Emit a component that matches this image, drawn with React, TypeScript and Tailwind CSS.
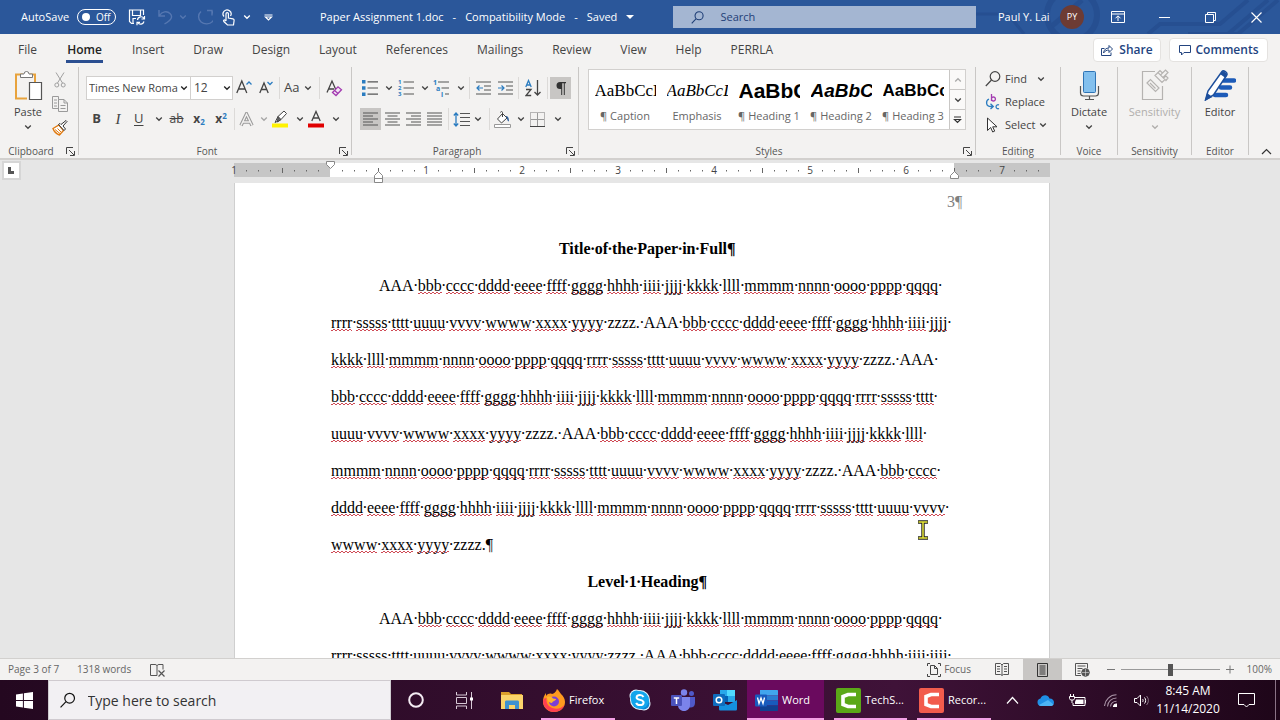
import type { ReactNode } from 'react'

/* ---------- small shared pieces ---------- */

function Chevron({ className = 'text-[#444]' }: { className?: string }) {
  return (
    <svg width="8" height="6" viewBox="0 0 8 6" className={`shrink-0 ${className}`} fill="none" stroke="currentColor" strokeWidth="1.3">
      <path d="M1.2 1.5 4 4.3 6.8 1.5" />
    </svg>
  )
}

type ToolProps = {
  label: string
  width: string
  children: ReactNode
  active?: boolean
  menu?: boolean
  faded?: boolean
}

function Tool({ label, width, children, active, menu, faded }: ToolProps) {
  return (
    <button
      type="button"
      aria-label={label}
      className={`flex h-[22px] shrink-0 items-center gap-1 ${menu ? 'justify-between px-[2px]' : 'justify-center'} ${active ? 'bg-[#c8c6c4]' : ''} ${width}`}
    >
      {children}
      {menu && <Chevron className={faded ? 'text-[#a6a6a6]' : 'text-[#444]'} />}
    </button>
  )
}

function Divider() {
  return <span className="mx-[2px] h-[22px] w-px shrink-0 bg-[#dcdad8]" />
}

function Launcher() {
  return (
    <button type="button" aria-label="More options" className="absolute right-[3px] -bottom-px">
      <svg width="9" height="9" viewBox="0 0 9 9" fill="none" stroke="#444">
        <path d="M.5 7V.5H7M3 3l5 5M8.500 4v4.500H4" />
      </svg>
    </button>
  )
}

type GroupProps = {
  name: string
  width: string
  launcher?: boolean
  children: ReactNode
}

function Group({ name, width, launcher, children }: GroupProps) {
  return (
    <section aria-label={name} className={`relative flex flex-col border-r border-[#c9c7c5] ${width}`}>
      <div className="flex-1">{children}</div>
      <div className={`text-center text-[10px] leading-2 text-[#555] ${launcher ? 'pr-4' : ''}`}>{name}</div>
      {launcher && <Launcher />}
    </section>
  )
}

/* ---------- title bar ---------- */

function TitleBar() {
  return (
    <header className="relative flex h-[34px] shrink-0 items-center overflow-hidden bg-[#2b579a] text-[12px] text-white">
      <svg className="absolute top-0 right-0" width="340" height="34" fill="none" stroke="#264f91">
        <circle cx="132" cy="15" r="25" strokeWidth="6" />
        <path d="M36 14h32l16 20" strokeWidth="3" />
        <path d="m112 26 30-26" strokeWidth="5" />
        <path d="M208 34l12-10h60l28-24M248 34h40l40-34M262 34h36l40-34" strokeWidth="4" />
      </svg>

      <div className="relative flex w-[310px] shrink-0 items-center pl-[21px]">
        <span className="text-[11px]">AutoSave</span>
        <button type="button" aria-label="AutoSave" className="ml-2 flex h-4 w-[39px] items-center gap-[6px] rounded-full border border-white px-1 text-[10px] leading-3">
          <span className="h-2 w-2 rounded-full bg-white" />
          Off
        </button>
        <button type="button" aria-label="Save" className="ml-3">
          <svg width="18" height="18" viewBox="0 0 18 18" fill="none" stroke="#fff" strokeWidth="1.2">
            <path d="M6 15.500H3.500L1.500 13.500V2h14v5M4.500 2v5.500h8V2M5 15.500v-5h3" />
            <path d="M9.500 12a3.500 3.500 0 0 1 6.500-1.500M16.500 8v3h-3M16 13.500a3.500 3.500 0 0 1-6.300 1M9 17.300v-3h3" />
          </svg>
        </button>
        <button type="button" aria-label="Undo" className="ml-3 flex items-center gap-[6px]">
          <svg width="15" height="16" viewBox="0 0 15 16" fill="none" stroke="#5577b1" strokeWidth="1.4">
            <path d="M1 1v6h6M1.500 6.500C4 2.500 9 1.500 12 4.500s2 6-5.500 10.500" />
          </svg>
          <Chevron className="text-[#5577b1]" />
        </button>
        <button type="button" aria-label="Redo" className="ml-[9px]">
          <svg width="17" height="17" viewBox="0 0 17 17" fill="none" stroke="#5577b1" strokeWidth="1.4">
            <path d="M11 1.500h5v5M15.500 2A8 7.200 0 1 1 5 2.500" />
          </svg>
        </button>
        <button type="button" aria-label="Touch mode" className="ml-[9px] flex items-center gap-2">
          <svg width="13" height="17" viewBox="0 0 13 17" fill="none" stroke="#fff" strokeWidth="1.200">
            <path d="M2 7.500a4 4 0 1 1 6.500-.5" />
            <path d="M4 12V4.800a1.200 1.200 0 0 1 2.400 0V9l4.600.8c1 .2 1.200.8 1.100 1.700L11.500 16H5.500L1.800 12.500c-.8-1 .4-2 1.300-1.300L4 12" />
          </svg>
          <Chevron className="text-white" />
        </button>
        <button type="button" aria-label="Customize toolbar" className="ml-[13px]">
          <svg width="9" height="7" viewBox="0 0 9 7" fill="none" stroke="#fff" strokeWidth="1.200">
            <path d="M.5 1h8M1.500 3l3 3 3-3z" />
          </svg>
        </button>
      </div>

      <h1 className="relative flex flex-1 items-center gap-[9px] pl-[10px] text-[11px] whitespace-nowrap">
        <span>Paper Assignment 1.doc</span>
        <span>-</span>
        <span>Compatibility Mode</span>
        <span>-</span>
        <span>Saved</span>
        <span className="border-x-[4px] border-t-[4px] border-x-transparent border-t-white" />
      </h1>

      <label className="relative flex h-[22px] w-[303px] shrink-0 items-center gap-4 bg-[#a4b6d2] pl-[18px] text-[#1f3f77]">
        <svg width="15" height="15" viewBox="0 0 15 15" fill="none" stroke="currentColor" strokeWidth="1.200">
          <circle cx="9" cy="5.500" r="4.500" />
          <path d="M5.800 8.700.8 14" />
        </svg>
        <input aria-label="Search" placeholder="Search" className="w-full bg-transparent text-[11px] outline-none placeholder:text-[#1f3f77]" />
      </label>

      <div className="relative flex w-[304px] shrink-0 items-center pl-[22px]">
        <span className="w-[52px] text-[11px] whitespace-nowrap">Paul Y. Lai</span>
        <span className="ml-[10px] flex h-6 w-6 items-center justify-center rounded-full bg-[#6d3b34] text-[9px]">PY</span>
        <button type="button" aria-label="Ribbon display options" className="ml-[27px]">
          <svg width="14" height="12" viewBox="0 0 14 12" fill="none" stroke="#fff">
            <path d="M.5.500h13v11H.5zM.5 3h13M7 10V5M4.500 7.300 7 4.800l2.500 2.500" />
          </svg>
        </button>
        <button type="button" aria-label="Minimize" className="ml-[34px]">
          <svg width="11" height="12" stroke="#fff"><path d="M0 6.500h11" /></svg>
        </button>
        <button type="button" aria-label="Restore" className="ml-[35px]">
          <svg width="11" height="11" viewBox="0 0 11 11" fill="none" stroke="#fff">
            <path d="M.5 2.500h8v8h-8zM2.500 2.500v-2h8v8h-2" />
          </svg>
        </button>
        <button type="button" aria-label="Close" className="ml-[35px]">
          <svg width="11" height="11" viewBox="0 0 11 11" stroke="#fff" strokeWidth="1.200">
            <path d="m.5.500 10 10M10.500.500l-10 10" />
          </svg>
        </button>
      </div>
    </header>
  )
}

/* ---------- ribbon tabs ---------- */

const TABS = ['File', 'Home', 'Insert', 'Draw', 'Design', 'Layout', 'References', 'Mailings', 'Review', 'View', 'Help', 'PERRLA']

function Tabs() {
  return (
    <nav className="flex h-[33px] shrink-0 items-center pr-3 pb-[2px] pl-[18px]">
      {TABS.map((tab) => (
        <button
          type="button"
          key={tab}
          className={`mr-[29px] text-[12px] leading-5 ${tab === 'Home' ? 'w-[37px] border-y-[3px] border-t-transparent border-b-[#2b4f91] font-semibold text-[#222]' : 'text-[#444]'}`}
        >
          {tab}
        </button>
      ))}
      <div className="ml-auto flex gap-2 text-[12px] font-semibold text-[#23447f]">
        <button type="button" className="flex h-6 w-[68px] items-center justify-center gap-[6px] rounded-sm border border-[#e4e2e0] bg-white">
          <svg width="12" height="12" viewBox="0 0 12 12" fill="none" stroke="currentColor">
            <path d="M3.500 4.500h-3v7h9.500V8.500M2.500 9c.5-3.500 2.500-5 5.500-5V1.500l3.500 3.500L8 8.500V6C5.500 6 4 7 2.500 9z" />
          </svg>
          Share
        </button>
        <button type="button" className="flex h-6 w-[99px] items-center justify-center gap-[5px] rounded-sm border border-[#e4e2e0] bg-white">
          <svg width="12" height="12" viewBox="0 0 12 12" fill="none" stroke="currentColor">
            <path d="M.5 1.500h11v7H5l-2.500 2.500V8.500h-2z" />
          </svg>
          Comments
        </button>
      </div>
    </nav>
  )
}

/* ---------- ribbon groups ---------- */

function ClipboardGroup() {
  return (
    <Group name="Clipboard" width="w-[79px]" launcher>
      <div className="flex pt-[3px]">
        <button type="button" className="flex w-[51px] flex-col items-center pl-[5px] text-[11px] leading-4 text-[#444]">
          <svg width="29" height="31" viewBox="0 0 29 31" fill="none">
            <path d="M9 4.500H2v24h11M21 12V4.500h-5" stroke="#e8a33d" strokeWidth="2" />
            <path d="M6.500 7.500V4h3.500a2.500 2.500 0 0 1 5 0h3.500v3.500z" fill="#fff" stroke="#777" />
            <path d="M15.500 12.500h12v17h-12z" fill="#fff" stroke="#555" strokeWidth="1.200" />
          </svg>
          <span className="mt-[3px]">Paste</span>
          <Chevron className="mt-1 text-[#444]" />
        </button>
        <div className="flex flex-col items-center gap-2 pt-[2px]">
          <button type="button" aria-label="Cut">
            <svg width="12" height="16" viewBox="0 0 12 16" fill="none" stroke="#a0a0a0">
              <path d="M2 .5 8.500 11M10 .5 3.500 11" />
              <circle cx="2.800" cy="13" r="2" />
              <circle cx="9.200" cy="13" r="2" />
            </svg>
          </button>
          <button type="button" aria-label="Copy">
            <svg width="16" height="16" viewBox="0 0 16 16" fill="#f3f2f1" stroke="#9a9a9a">
              <path d="M.5.500h6v12h-6zM2 4h3M2 7h3M2 10h3" />
              <path d="M6.500 3.500h5.500l3.500 3.500v8.500h-9zM12 3.500V7h3.500M8.500 9.500h5M8.500 12.500h5" />
            </svg>
          </button>
          <button type="button" aria-label="Format painter">
            <svg width="17" height="16" viewBox="0 0 17 16" fill="none">
              <path d="M2 8.500 8 5l4.500 5.500-4 4.500C6 14 3 11.500 2 8.500z" fill="#fff" stroke="#e07a10" strokeWidth="1.400" />
              <path d="m4 9.500 5.500 4.500M6.500 8.500 10 12" stroke="#e07a10" />
              <path d="M7.500 4.500 13 10.500l1.500-1.500-2.500-3 4-4.500-1-1-5 4L9 3.500z" fill="#fff" stroke="#333" />
            </svg>
          </button>
        </div>
      </div>
    </Group>
  )
}

function FontGroup() {
  return (
    <Group name="Font" width="w-[273px]" launcher>
      <div className="flex flex-col gap-[9px] pt-[10px] pl-[7px] text-[#444]">
        <div className="flex h-[22px] items-center">
          <div className="relative flex">
            <select aria-label="Font" className="h-6 w-[105px] appearance-none border border-[#d2d0ce] bg-white pr-3 pl-[2px] text-[11px]">
              <option>Times New Roman</option>
            </select>
            <Chevron className="pointer-events-none absolute top-[9px] right-[3px] text-[#222]" />
          </div>
          <div className="relative -ml-px flex">
            <select aria-label="Font size" className="h-6 w-[43px] appearance-none border border-[#d2d0ce] bg-white pl-[3px] text-[12px]">
              <option>12</option>
            </select>
            <Chevron className="pointer-events-none absolute top-[9px] right-[2px] text-[#222]" />
          </div>
          <Tool label="Grow font" width="w-[22px]">
            <svg width="16" height="18" viewBox="0 0 16 18" fill="none" stroke="#444" strokeWidth="1.300">
              <path d="M.8 14 5.800 2l5 12M2.500 10h6.600" />
              <path d="M10.500 5.500 13 3l2.500 2.500" stroke="#2b7cc0" />
            </svg>
          </Tool>
          <Tool label="Shrink font" width="w-[22px]">
            <svg width="14" height="18" viewBox="0 0 14 18" fill="none" stroke="#444" strokeWidth="1.300">
              <path d="M.8 14 5 4l4.200 10M2.300 10.500h5.400" />
              <path d="M8.500 3 11 5.500 13.500 3" stroke="#2b7cc0" />
            </svg>
          </Tool>
          <Divider />
          <Tool label="Change case" width="w-[32px]" menu>
            <span className="text-[13px]">Aa</span>
          </Tool>
          <span className="w-[3px]" />
          <Divider />
          <Tool label="Clear formatting" width="w-[24px]">
            <svg width="17" height="18" viewBox="0 0 17 18" fill="none" stroke="#444" strokeWidth="1.300">
              <path d="M1 13.500 6 2l4 9M3 10h5" />
              <path d="M6.500 13.500 12 7.800l3.500 3-5.500 5.700zM8.500 11.500 12 14.500" stroke="#a33bb0" fill="#f3e6f5" />
            </svg>
          </Tool>
        </div>
        <div className="flex items-center text-[14px]">
          <Tool label="Bold" width="w-[21px]"><b className="text-[13px]">B</b></Tool>
          <Tool label="Italic" width="w-[22px]"><i className="font-['Liberation_Serif',serif] text-[15px]">I</i></Tool>
          <Tool label="Underline" width="w-[36px]" menu><span className="pl-[3px] text-[13px] underline underline-offset-2">U</span></Tool>
          <Tool label="Strikethrough" width="w-[23px]"><s className="text-[12px]">ab</s></Tool>
          <Tool label="Subscript" width="w-[22px]">
            <span className="text-[12px] leading-4 font-bold">x<sub className="text-[8px] text-[#2b7cc0]">2</sub></span>
          </Tool>
          <Tool label="Superscript" width="w-[22px]">
            <span className="text-[12px] leading-4 font-bold">x<sup className="text-[8px] text-[#2b7cc0]">2</sup></span>
          </Tool>
          <Divider />
          <Tool label="Text effects" width="w-[33px]" menu faded>
            <svg width="15" height="15" viewBox="0 0 15 15" fill="none">
              <path d="M2 13.500 7.500 2 13 13.500M4 10h7" stroke="#9b9b9b" strokeWidth="3.500" />
              <path d="M2 13.500 7.500 2 13 13.500M4 10h7" stroke="#f3f2f1" strokeWidth="1.400" />
            </svg>
          </Tool>
          <Tool label="Highlight color" width="w-[36px]" menu>
            <svg width="16" height="18" viewBox="0 0 16 18" fill="none" stroke="#444">
              <path d="M3 12.500 6 6.500l6-5.500 2.500 2.500-5.500 6z" fill="#fff" />
              <path d="M6 6.500 9 9.500 5.500 12z" fill="#666" />
              <path d="M0 13.500h16v4H0z" fill="#fff200" stroke="none" />
            </svg>
          </Tool>
          <Tool label="Font color" width="w-[36px]" menu>
            <svg width="16" height="18" viewBox="0 0 16 18" fill="none" stroke="#444" strokeWidth="1.300">
              <path d="M3.800 11 8 1.500 12.200 11M5.300 8h5.400" />
              <path d="M0 13.500h16v4H0z" fill="#e00000" stroke="none" />
            </svg>
          </Tool>
        </div>
      </div>
    </Group>
  )
}

function Lines({ d }: { d: string }) {
  return (
    <svg width="15" height="14" viewBox="0 0 15 14" stroke="#555" strokeWidth="1.200">
      <path d={d} />
    </svg>
  )
}

function ParagraphGroup() {
  return (
    <Group name="Paragraph" width="w-[227px]" launcher>
      <div className="flex flex-col gap-[9px] pt-[10px] pl-2">
        <div className="flex items-center">
          <Tool label="Bullets" width="w-[35px]" menu>
            <svg width="16" height="16" viewBox="0 0 16 16">
              <path d="M0 0h3.500v3.500H0zM0 6.200h3.500v3.500H0zM0 12.400h3.500V16H0z" fill="#2b7cc0" />
              <path d="M5.500 1.800H16M5.500 8H16M5.500 14.200H16" stroke="#555" strokeWidth="1.200" />
            </svg>
          </Tool>
          <Tool label="Numbering" width="w-[36px]" menu>
            <svg width="17" height="18" viewBox="0 0 17 18">
              <g fill="#2b7cc0" fontSize="6" fontWeight="700">
                <text x="1" y="5">1</text>
                <text x="1" y="11">2</text>
                <text x="1" y="17">3</text>
              </g>
              <path d="M6.500 3H17M6.500 9H17M6.500 15H17" stroke="#555" strokeWidth="1.200" />
            </svg>
          </Tool>
          <Tool label="Multilevel list" width="w-[36px]" menu>
            <svg width="17" height="18" viewBox="0 0 17 18">
              <g fill="#2b7cc0" fontSize="7" fontWeight="700">
                <text x="0" y="5.500">1</text>
                <text x="3" y="11.500">a</text>
                <text x="8" y="17.500">i</text>
              </g>
              <path d="M5 3h11M8.500 9H16M12 15h4" stroke="#555" strokeWidth="1.200" />
            </svg>
          </Tool>
          <Divider />
          <Tool label="Decrease indent" width="w-[22px]">
            <svg width="15" height="14" viewBox="0 0 15 14" fill="none" stroke="#555" strokeWidth="1.200">
              <path d="M0 1h15M8 5h7M8 9h7M0 13h15" />
              <path d="M7 7H1M3.500 4.500 1 7l2.500 2.500" stroke="#2b7cc0" />
            </svg>
          </Tool>
          <Tool label="Increase indent" width="w-[22px]">
            <svg width="15" height="14" viewBox="0 0 15 14" fill="none" stroke="#555" strokeWidth="1.200">
              <path d="M0 1h15M8 5h7M8 9h7M0 13h15" />
              <path d="M0 7h6M3.500 4.500 6 7 3.500 9.500" stroke="#2b7cc0" />
            </svg>
          </Tool>
          <Divider />
          <Tool label="Sort" width="w-[24px]">
            <svg width="17" height="18" viewBox="0 0 17 18" fill="none" strokeWidth="1.300">
              <path d="M.8 8 3.500 1.500 6.200 8M1.800 6h3.400" stroke="#2b7cc0" />
              <path d="M1 10.500h5L1 16.500h5.200M12.500 1v15M9.500 13l3 3 3-3" stroke="#444" />
            </svg>
          </Tool>
          <Divider />
          <Tool label="Show formatting marks" width="w-[21px]" active>
            <svg width="10" height="13" viewBox="0 0 10 13" fill="#333">
              <path d="M4 0h6v1.200H8.800V13H7.800V1.200H6.200V13H5.200V7H4a3.500 3.500 0 0 1 0-7z" />
            </svg>
          </Tool>
        </div>
        <div className="flex items-center">
          <Tool label="Align left" width="w-[21px]" active><Lines d="M0 1h15M0 4h10M0 7h15M0 10h10M0 13h15" /></Tool>
          <Tool label="Center" width="w-[22px]"><Lines d="M0 1h15M2.500 4h10M0 7h15M2.500 10h10M0 13h15" /></Tool>
          <Tool label="Align right" width="w-[21px]"><Lines d="M0 1h15M5 4h10M0 7h15M5 10h10M0 13h15" /></Tool>
          <Tool label="Justify" width="w-[21px]"><Lines d="M0 1h15M0 4h15M0 7h15M0 10h15M0 13h15" /></Tool>
          <span className="w-px" />
          <Divider />
          <Tool label="Line spacing" width="w-[33px]" menu>
            <svg width="17" height="15" viewBox="0 0 17 15" fill="none" stroke="#555" strokeWidth="1.200">
              <path d="M7 1.500h10M7 5.500h10M7 9.500h10M7 13.500h10" />
              <path d="M3 1v13M.8 3.500 3 1l2.200 2.500M.8 11.500 3 14l2.200-2.500" stroke="#2b7cc0" strokeWidth="1.300" />
            </svg>
          </Tool>
          <span className="w-[3px]" />
          <Divider />
          <Tool label="Shading" width="w-[35px]" menu>
            <svg width="17" height="17" viewBox="0 0 17 17" fill="none" stroke="#444">
              <path d="m3.500 8 5-5.500 4.500 4.500-5.500 5zM8.500 6V1.500C8.500.3 6.500.3 6.500 1.500" fill="#fff" />
              <path d="M11.500 5c2 0 3.500 1 3.500 5.500-1.500-.5-2-2-2-3.500z" fill="#2b5c99" stroke="none" />
              <path d="M.5 13.500h16v3H.5z" fill="#fff" stroke="#999" />
            </svg>
          </Tool>
          <span className="w-px" />
          <Tool label="Borders" width="w-[36px]" menu>
            <svg width="15" height="15" viewBox="0 0 15 15" fill="none" stroke="#777">
              <path d="M.5.500h14v14H.5z" strokeDasharray="1 1" />
              <path d="M7.500 1v13M1 7.500h13" stroke="#999" />
              <path d="M0 14.500h15" stroke="#444" />
            </svg>
          </Tool>
        </div>
      </div>
    </Group>
  )
}

const STYLES = [
  { name: '¶ Caption', sample: 'AaBbCcD', look: "font-['Liberation_Serif',serif] text-[17px]" },
  { name: 'Emphasis', sample: 'AaBbCcD', look: "font-['Liberation_Serif',serif] text-[17px] italic" },
  { name: '¶ Heading 1', sample: 'AaBbC', look: "font-['Liberation_Sans',sans-serif] text-[21px] font-semibold" },
  { name: '¶ Heading 2', sample: 'AaBbC', look: "font-['Liberation_Sans',sans-serif] text-[19px] font-bold italic" },
  { name: '¶ Heading 3', sample: 'AaBbCc', look: "font-['Liberation_Sans',sans-serif] text-[17px] font-bold" },
]

function StylesGroup() {
  return (
    <Group name="Styles" width="flex-1 min-w-0" launcher>
      <div className="mx-[9px] mt-[2px] flex h-[61px] border border-[#d2d0ce] bg-white">
        <div className="flex flex-1 overflow-hidden">
          {STYLES.map((s) => (
            <button type="button" key={s.name} className="flex w-[72px] shrink-0 flex-col items-center pt-2">
              <span className={`h-[26px] w-[61px] overflow-hidden text-left leading-[26px] whitespace-nowrap text-black ${s.look}`}>{s.sample}</span>
              <span className="text-[11px] leading-6 whitespace-nowrap text-[#666]">{s.name}</span>
            </button>
          ))}
        </div>
        <div className="flex w-4 flex-col divide-y divide-[#c9c7c5] border-l border-[#c9c7c5] bg-[#faf9f8]">
          <button type="button" aria-label="Scroll up" className="flex flex-1 items-center justify-center">
            <Chevron className="rotate-180 text-[#aaa]" />
          </button>
          <button type="button" aria-label="Scroll down" className="flex flex-1 items-center justify-center">
            <Chevron />
          </button>
          <button type="button" aria-label="More styles" className="flex flex-1 items-center justify-center">
            <svg width="9" height="8" viewBox="0 0 9 8" fill="none" stroke="#333" strokeWidth="1.200">
              <path d="M1 1h7M1.500 3.500l3 3 3-3z" />
            </svg>
          </button>
        </div>
      </div>
    </Group>
  )
}

function EditingGroup() {
  return (
    <Group name="Editing" width="w-[85px]">
      <div className="flex flex-col pl-[9px] text-[11px] leading-[23px] text-[#444]">
        <button type="button" className="flex items-center gap-1 text-left">
          <svg width="16" height="16" viewBox="0 0 16 16" fill="none" stroke="#444" strokeWidth="1.200">
            <circle cx="10" cy="5.500" r="4.800" />
            <path d="M6.500 9 .8 15" />
          </svg>
          Find <Chevron className="ml-[6px] text-[#444]" />
        </button>
        <button type="button" className="flex items-center gap-1 text-left">
          <svg width="16" height="18" viewBox="0 0 16 18" fill="none" strokeWidth="1.300">
            <path d="M6.500 1v7M6.500 5.500a2 2 0 1 1 0 1" stroke="#a33bb0" />
            <path d="M14 12a2 2 0 1 0 0 3.500M4 6C.5 7.500.5 13.500 6 13.500H8M5.500 10.800 8.300 13.500 5.500 16" stroke="#2b7cc0" />
          </svg>
          Replace
        </button>
        <button type="button" className="flex items-center gap-1 text-left">
          <svg width="16" height="16" viewBox="0 0 16 16" fill="#fff" stroke="#333">
            <path d="M2.500 1v12.500l3.200-3 2 4.500 2-.9-2-4.300h4.300z" />
          </svg>
          Select <Chevron />
        </button>
      </div>
    </Group>
  )
}

function BigTool({ label, icon, menu, faded }: { label: string; icon: ReactNode; menu?: boolean; faded?: boolean }) {
  const color = faded ? 'text-[#b0aeac]' : 'text-[#444]'
  return (
    <button type="button" disabled={faded} className={`flex w-full flex-col items-center pt-[2px] text-[11px] leading-4 ${color}`}>
      {icon}
      <span className="mt-[3px]">{label}</span>
      {menu && <Chevron className={`mt-1 ${color}`} />}
    </button>
  )
}

function Ribbon() {
  return (
    <div className="flex h-[93px] shrink-0 border-b-2 border-[#d2d0ce] pb-[3px]">
      <ClipboardGroup />
      <FontGroup />
      <ParagraphGroup />
      <StylesGroup />
      <EditingGroup />
      <Group name="Voice" width="w-[57px]">
        <BigTool
          label="Dictate"
          menu
          icon={
            <svg width="21" height="32" viewBox="0 0 21 32" fill="none">
              <rect x="4.500" y="2.500" width="12" height="21" rx="1" fill="#83c0ee" stroke="#2f74b5" />
              <path d="M1.500 17v7c0 2 1 3 3 3h12c2 0 3-1 3-3v-7M10.500 27v3M6 30.500h9" stroke="#555" strokeWidth="1.200" />
            </svg>
          }
        />
      </Group>
      <Group name="Sensitivity" width="w-[74px]">
        <BigTool
          label="Sensitivity"
          menu
          faded
          icon={
            <svg width="28" height="32" viewBox="0 0 28 32" fill="none" stroke="#b5b3b1" strokeWidth="1.200">
              <path d="M14 2.500H1.500v28h20V17" />
              <path d="m6 14 3.500-3.500 8.500 8.500-3.500 3.500zM9 14l5.500 5.500" />
              <path d="m14 6.500 3-3 7 7-3 3zM16 4.500l3-3 2.500 2.500M19.500 6l5-5 2.500 2.500-5 5M22.500 9l2.500-2 2 2-2.500 3" />
            </svg>
          }
        />
      </Group>
      <Group name="Editor" width="w-[57px]">
        <BigTool
          label="Editor"
          icon={
            <svg width="32" height="32" viewBox="0 0 32 32" fill="none">
              <path d="M19 11.500h11M17 18.500h9M11 26h11" stroke="#1d5bb8" strokeWidth="4.500" strokeLinecap="round" />
              <path d="M1.500 31 4 22 18 2.500c1.500-1.800 6 1.200 4.800 3.500L9.500 26z" fill="#fff" stroke="#1d4f9c" strokeWidth="1.500" />
              <path d="M1 31.500 3 24l5.500 4zM16 5l5.500 4 1.500-3c0-2-4-4.500-5-3.500z" fill="#1d4f9c" />
            </svg>
          }
        />
      </Group>
      <div className="flex w-[31px] items-end justify-center pl-1">
        <button type="button" aria-label="Collapse ribbon">
          <svg width="11" height="7" viewBox="0 0 11 7" fill="none" stroke="#333" strokeWidth="1.200">
            <path d="M1 6 5.500 1.500 10 6" />
          </svg>
        </button>
      </div>
    </div>
  )
}

/* ---------- document ---------- */

// One tick every eighth of an inch, 96px per inch; zero sits at the left margin
function Ruler() {
  const ticks = Array.from({ length: 67 }, (_, i) => i + 1).filter((i) => i % 8 !== 0)
  return (
    <svg width="816" height="23" className="block shrink-0 overflow-visible" fill="none">
      <path d="M0 3h816v14H0z" fill="#c6c6c6" />
      <path d="M96 3h624v14H96z" fill="#fff" />
      {ticks.map((i) => (
        <path key={i} d={i % 4 === 0 ? `M${i * 12 + 0.5} 8v5` : `M${i * 12 + 0.5} 10v1.500`} stroke="#666" />
      ))}
      <g fill="#444" fontSize="10" textAnchor="middle">
        <text x="0" y="14">1</text>
        {[1, 2, 3, 4, 5, 6, 7].map((n) => (
          <text key={n} x={96 + n * 96} y="14">{n}</text>
        ))}
      </g>
      <g fill="#fff" stroke="#888">
        <path d="M92.500 1.500h8v3l-4 4-4-4z" />
        <path d="M144.500 11.500l4 4v7h-8v-7zM140.500 18.500h8" />
        <path d="M720.500 11.500l4 4v3h-8v-3z" />
      </g>
    </svg>
  )
}

const ALPHABET = 'AAA bbb cccc dddd eeee ffff gggg hhhh iiii jjjj kkkk llll mmmm nnnn oooo pppp qqqq rrrr sssss tttt uuuu vvvv wwww xxxx yyyy zzzz.'.split(' ')

const SQUIGGLE =
  'bg-[linear-gradient(90deg,#cf4a55_50%,transparent_50%),linear-gradient(90deg,#cf4a55_50%,transparent_50%)] bg-repeat-x [background-position:0_100%,2px_calc(100%-1px)] [background-size:4px_1px]'

// Formatting mark for a space: takes the width of the space, not of the dot
function SpaceMark() {
  return <span className="inline-flex w-1 justify-center">·</span>
}

function Filler({ words }: { words: number }) {
  const list = Array.from({ length: words }, (_, i) => ALPHABET[i % ALPHABET.length])
  return (
    <p className="indent-12">
      {list.map((word, i) => {
        const plain = word === 'AAA' || word === 'zzzz.'
        const ended = i === list.length - 1 && word.endsWith('.')
        return (
          <span key={i}>
            <span className="whitespace-nowrap">
              <span className={plain ? '' : SQUIGGLE}>{word}</span>
              <span className="indent-0">{ended ? '¶' : <SpaceMark />}</span>
            </span>
            <wbr />
          </span>
        )
      })}
    </p>
  )
}

function Heading({ children }: { children: string }) {
  return (
    <h2 className="text-center font-bold">
      {children.split(' ').map((word, i) => (
        <span key={i}>
          {i > 0 && <SpaceMark />}
          {word}
        </span>
      ))}
      <span className="inline-block w-0">¶</span>
    </h2>
  )
}

function Document() {
  return (
    <main className="relative flex min-h-0 flex-1 flex-col items-center overflow-hidden bg-[#e6e6e6] pl-1">
      <button type="button" aria-label="Tab stop" className="absolute top-px left-[2px] flex h-[19px] w-[19px] items-end justify-start border-2 border-[#d6d6d6] bg-white p-1">
        <span className="h-[7px] w-[6px] border-b-[3px] border-l-[3px] border-[#555]" />
      </button>
      <Ruler />
      <article className="w-[816px] shrink-0 border-x border-[#cfcfcf] bg-white pr-[94px] pl-24 font-['Liberation_Serif',serif] text-[16px] leading-[37px] text-black">
        <div className="pb-[10px] text-right text-[#808080]">
          3<span className="inline-block w-0">¶</span>
        </div>
        <Heading>Title of the Paper in Full</Heading>
        <Filler words={130} />
        <Heading>Level 1 Heading</Heading>
        <Filler words={36} />
      </article>
      <svg className="absolute top-[360px] left-[917px]" width="12" height="20" viewBox="0 0 12 20" fill="none">
        <path d="M1 2h10M6 2v16M1 18h10" stroke="#222" strokeWidth="3.400" />
        <path d="M1.500 2h9M6 2v16M1.500 18h9" stroke="#e8e83a" strokeWidth="1.500" />
      </svg>
    </main>
  )
}

/* ---------- status bar ---------- */

function StatusBar() {
  return (
    <footer className="flex h-[22px] shrink-0 items-center border-t border-[#d2d0ce] text-[11px] text-[#666]">
      <span className="w-[77px] pl-2 text-[10px]">Page 3 of 7</span>
      <span className="text-[10px]">1318 words</span>
      <button type="button" aria-label="Proofing" className="ml-[19px]">
        <svg width="15" height="14" viewBox="0 0 15 14" fill="none" stroke="#555">
          <path d="M7 12.500H.5v-11h4.500c1.500 0 2 .8 2 1.500v9.500M7 3c0-.7.5-1.500 2-1.500h4v5" />
          <path d="m8.500 7.500 6 6M14.500 7.500l-6 6" strokeWidth="1.200" />
        </svg>
      </button>
      <button type="button" className="ml-auto flex items-center gap-[3px] text-[10px]">
        <svg width="14" height="14" viewBox="0 0 14 14" fill="none" stroke="#444">
          <path d="M3 .5H.5V3M11 .5h2.500V3M.5 11v2.500H3M13.500 11v2.500H11M3.500 2.500h4L10.500 5.500v6h-7zM7.500 2.500v3h3" />
        </svg>
        Focus
      </button>
      <button type="button" aria-label="Read mode" className="ml-6">
        <svg width="14" height="13" viewBox="0 0 14 13" fill="none" stroke="#555">
          <path d="M7 12V2L5.500.5H.5v11h5L7 12.500l1.500-1h5V.5h-5L7 2M2 3.500h3M2 6h3M2 8.500h3M9 3.500h3M9 6h3M9 8.500h3" />
        </svg>
      </button>
      <button type="button" aria-label="Print layout" className="ml-[14px] flex h-full w-[39px] items-center justify-center bg-[#c8c6c4]">
        <svg width="11" height="14" viewBox="0 0 11 14" fill="none" stroke="#333">
          <path d="M.5.500h10v13H.5zM2.500 3h6M2.500 5h6M2.500 7h6M2.500 9h6M2.500 11h6" />
        </svg>
      </button>
      <button type="button" aria-label="Web layout" className="ml-[13px]">
        <svg width="15" height="14" viewBox="0 0 15 14" fill="none" stroke="#555">
          <path d="M6 12.500H.5V.5h12v5M2.500 3h8M2.500 5.500h5M2.500 8h3M2.500 10.500h3" />
          <circle cx="10.500" cy="9.500" r="3.800" fill="#555" />
          <path d="M7 9.500h7M10.500 6v7" stroke="#ddd" strokeWidth=".6" />
        </svg>
      </button>
      <button type="button" aria-label="Zoom out" className="ml-[17px]">
        <svg width="8" height="9" stroke="#777"><path d="M0 4.500h8" /></svg>
      </button>
      <input
        type="range"
        aria-label="Zoom"
        defaultValue={50}
        className="mx-[6px] h-3 w-[99px] appearance-none bg-[linear-gradient(#9a9a9a,#9a9a9a)] bg-[length:100%_1px] bg-center bg-no-repeat [&::-webkit-slider-thumb]:h-3 [&::-webkit-slider-thumb]:w-[5px] [&::-webkit-slider-thumb]:appearance-none [&::-webkit-slider-thumb]:bg-[#555]"
      />
      <button type="button" aria-label="Zoom in">
        <svg width="8" height="9" stroke="#777"><path d="M0 4.500h8M4 .5v8" /></svg>
      </button>
      <span className="w-[46px] pr-2 text-right text-[10px]">100%</span>
    </footer>
  )
}

/* ---------- taskbar ---------- */

function TaskButton({ label, width, active, children }: { label: string; width: string; active?: boolean; children: ReactNode }) {
  return (
    <button
      type="button"
      className={`flex h-full shrink-0 items-center gap-1 border-b-2 border-[#f3a0e4] pt-[2px] text-[11px] whitespace-nowrap ${active ? 'bg-[#6a0a5e] pl-2' : 'pl-[2px]'} ${width}`}
    >
      {children}
      {label}
    </button>
  )
}

function Camtasia({ color }: { color: string }) {
  return (
    <svg width="25" height="25" viewBox="0 0 25 25" fill="none">
      <rect width="25" height="25" rx="2" fill={color} />
      <path d="M20 6.500h-8l-5 2v8l5 2h8" stroke="#fff" strokeWidth="3.600" />
    </svg>
  )
}

function Taskbar() {
  return (
    <div className="flex h-10 shrink-0 items-center bg-linear-to-r from-[#240820] via-[#3f1238] via-70% to-[#1e0619] text-white">
      <button type="button" aria-label="Start" className="flex h-full w-12 items-center justify-center">
        <svg width="17" height="17" viewBox="0 0 17 17" fill="#fff">
          <path d="M0 2.400 6.900 1.400V8H0zM7.900 1.300 17 0v8H7.900zM0 9h6.900v6.600L0 14.600zM7.900 9H17v8l-9.100-1.300z" />
        </svg>
      </button>
      <label className="flex h-full w-[343px] items-center gap-3 border border-[#cfcacf] bg-[#f2f0f3] pl-[11px] text-[#222]">
        <svg width="17" height="17" viewBox="0 0 17 17" fill="none" stroke="#111" strokeWidth="1.300">
          <circle cx="10.500" cy="6" r="5.300" />
          <path d="M6.600 9.800.6 16" />
        </svg>
        <input aria-label="Search Windows" placeholder="Type here to search" className="w-full bg-transparent text-[14px] outline-none placeholder:text-[#333]" />
      </label>
      <button type="button" aria-label="Cortana" className="ml-[17px]">
        <svg width="16" height="16" viewBox="0 0 16 16" fill="none" stroke="#f4ecf3" strokeWidth="2">
          <circle cx="8" cy="8" r="6.800" />
        </svg>
      </button>
      <button type="button" aria-label="Task view" className="ml-8">
        <svg width="17" height="17" viewBox="0 0 17 17" fill="none" stroke="#d8c9d6">
          <path d="M.5 0v3h10V0M.5 5.500h10v6H.5zM.5 17v-3h10v3M15.500 0v17" />
          <path d="M14 5.500h3v3h-3z" fill="#fff" stroke="none" />
        </svg>
      </button>
      <button type="button" aria-label="File Explorer" className="ml-7">
        <svg width="22" height="19" viewBox="0 0 22 19">
          <path d="M0 1h8l2 2h11v4H0z" fill="#dc9f2c" />
          <path d="M0 4h22v14H0z" fill="#fbd46b" />
          <path d="M4 18v-7c0-1 .6-1.500 1.500-1.500h11c1 0 1.500.6 1.500 1.500v7h-4v-4H8v4z" fill="#3e92d1" />
        </svg>
      </button>
      <span className="w-[18px]" />
      <TaskButton label="Firefox" width="w-[74px]">
        <svg width="22" height="23" viewBox="0 0 22 23">
          <path d="M14 0c2.500 2 3 4 4 5 2.500 2 4 5 4 8 0 6-5 10-11 10S0 18.500 0 12.500c0-3 1-6 3-8.500v3C5 4.500 7 4 9 5c2-.5 4-2 5-5z" fill="#ff9a1f" />
          <path d="M0 12c0 6 5 11 11 11 5 0 9-3 10.500-7-3 3-7 5-12 3C5 17.500 3 14 3.500 9 1.500 9 .5 10 0 12z" fill="#ff3f52" />
          <circle cx="11" cy="12.500" r="5" fill="#7b3fd6" />
          <path d="M4 8c3-1 5 0 6 1.500l3 .5c0 2-3 1.500-4 4C6 14 4 11 4 8z" fill="#ffb52e" />
        </svg>
      </TaskButton>
      <button type="button" aria-label="Skype" className="ml-[14px]">
        <svg width="22" height="22" viewBox="0 0 22 22">
          <circle cx="7" cy="7" r="6.500" fill="#e8f6fd" />
          <circle cx="15" cy="15" r="6.500" fill="#e8f6fd" />
          <circle cx="11" cy="11" r="10" fill="#e8f6fd" />
          <circle cx="7.500" cy="7.500" r="6" fill="#12a5ec" />
          <circle cx="14.500" cy="14.500" r="6" fill="#0a86d6" />
          <circle cx="11" cy="11" r="9" fill="#12a5ec" />
          <path d="M14.500 8c-.8-1.500-2-2-3.500-2-2 0-3.400.9-3.400 2.400 0 3.300 7 1.700 7 5 0 1.600-1.500 2.700-3.600 2.700-1.800 0-3.200-.7-3.800-2.300" fill="none" stroke="#fff" strokeWidth="2" />
        </svg>
      </button>
      <button type="button" aria-label="Teams" className="ml-5">
        <svg width="24" height="22" viewBox="0 0 24 22">
          <circle cx="13" cy="3.500" r="3.200" fill="#7b83eb" />
          <circle cx="20.500" cy="4.500" r="2.500" fill="#5059c9" />
          <path d="M15 8h9v6c0 3-2 4.500-4.500 4.500S15 17 15 14z" fill="#5059c9" />
          <path d="M7 8h12v8c0 3.500-2.500 6-6 6s-6-2.500-6-6z" fill="#7b83eb" />
          <rect y="6" width="11" height="11" rx="1" fill="#4b53bc" />
          <path d="M2.800 9h5.400M5.500 9v6" stroke="#fff" strokeWidth="1.500" />
        </svg>
      </button>
      <button type="button" aria-label="Outlook" className="ml-[18px]">
        <svg width="24" height="22" viewBox="0 0 24 22">
          <path d="M7 1h15v12H7z" fill="#28a8ea" />
          <path d="M14 1h8v6h-8z" fill="#50d9ff" />
          <path d="M7 7h8v6H7z" fill="#0364b8" />
          <path d="M6 12l9 4 9-5v9c0 1-.6 1.500-1.500 1.500h-15C6.600 21.500 6 21 6 20z" fill="#1490df" />
          <rect y="5" width="12" height="12" rx="1" fill="#0f6cbd" />
          <circle cx="6" cy="11" r="2.800" fill="none" stroke="#fff" strokeWidth="1.500" />
        </svg>
      </button>
      <span className="w-[10px]" />
      <TaskButton label="Word" width="w-[77px]" active>
        <svg width="23" height="21" viewBox="0 0 23 21">
          <path d="M5 0h17c.6 0 1 .4 1 1v4.500H5z" fill="#41a5ee" />
          <path d="M5 5.500h18v5H5z" fill="#2b7cd3" />
          <path d="M5 10.500h18v5H5z" fill="#185abd" />
          <path d="M5 15.500h18V20c0 .6-.4 1-1 1H5z" fill="#103f91" />
          <rect y="4.500" width="12" height="12" rx="1" fill="#185abd" />
          <path d="m2.500 7.500 1.500 6 2-5.500 2 5.500 1.500-6" fill="none" stroke="#fff" strokeWidth="1.300" />
        </svg>
      </TaskButton>
      <span className="w-[10px]" />
      <TaskButton label="TechS..." width="w-[73px]"><Camtasia color="#5ba818" /></TaskButton>
      <span className="w-[10px]" />
      <TaskButton label="Recor..." width="w-[74px]"><Camtasia color="#f25c4d" /></TaskButton>

      <div className="ml-auto flex h-full items-center">
        <button type="button" aria-label="Show hidden icons">
          <svg width="13" height="9" viewBox="0 0 13 9" fill="none" stroke="#fff" strokeWidth="1.200"><path d="m1 7.500 5.500-6 5.500 6" /></svg>
        </button>
        <svg className="ml-[18px]" width="17" height="11" viewBox="0 0 17 11">
          <path d="M4 11a3.800 3.800 0 0 1-.5-7.500C5-.5 11-1 12.500 3.500 15.500 3.500 17 5.500 17 7.500S15.500 11 13.500 11z" fill="#1f8fe5" />
          <path d="m2 10 9-5 5.500 4.500c-.8 1-1.800 1.500-3 1.500H4C3.200 11 2.500 10.600 2 10z" fill="#4db4f5" />
        </svg>
        <svg className="ml-[15px]" width="18" height="13" viewBox="0 0 18 13" fill="none" stroke="#fff">
          <path d="M5 3.500h11v8H4V9M16.500 6v3.500" />
          <path d="M7 5.500h7.500V10H6V8z" fill="#fff" stroke="none" />
          <path d="M1.500 0v2M4.500 0v2M.5 2.500h5v2l-1 1.500h-3l-1-1.500zM3 6v3" />
        </svg>
        <svg className="ml-[17px]" width="13" height="13" viewBox="0 0 13 13" fill="none" stroke="#a892a5" strokeWidth="1.100">
          <path d="M.5 12A12 12 0 0 1 12.500.8M3.500 12.500a9 9 0 0 1 9-8.500M6.500 12.500A6 6 0 0 1 12.500 7.200" />
          <path d="M9.500 12.500a3 3 0 0 1 3-2.500v2.500z" fill="#fff" stroke="#fff" />
        </svg>
        <svg className="ml-[17px]" width="16" height="13" viewBox="0 0 16 13" fill="none" stroke="#fff">
          <path d="M.5 4.500h2.500l3.500-3.500v11L3 8.500H.5zM8.500 5c.8.800.8 2.200 0 3M10.500 3.500c1.500 1.500 1.500 4.500 0 6" />
          <path d="M12.500 2c2.500 2.500 2.500 6.500 0 9" stroke="#8d7889" />
        </svg>
        <time className="ml-1 w-[68px] text-center text-[12px] leading-[18px]">
          <span className="block">8:45 AM</span>
          <span className="block">11/14/2020</span>
        </time>
        <button type="button" aria-label="Notifications" className="mr-5 ml-4">
          <svg width="17" height="17" viewBox="0 0 17 17" fill="none" stroke="#fff">
            <path d="M.5 1.500h16v11H11L8.500 15 6 12.500H.5z" />
          </svg>
        </button>
        <span className="mr-1 h-full w-px bg-[#8a7386]" />
      </div>
    </div>
  )
}

export default function App() {
  return (
    <div className="flex h-screen flex-col overflow-hidden bg-[#f3f2f1] font-['Open_Sans','Noto_Sans',sans-serif]">
      <TitleBar />
      <Tabs />
      <Ribbon />
      <Document />
      <StatusBar />
      <Taskbar />
    </div>
  )
}
